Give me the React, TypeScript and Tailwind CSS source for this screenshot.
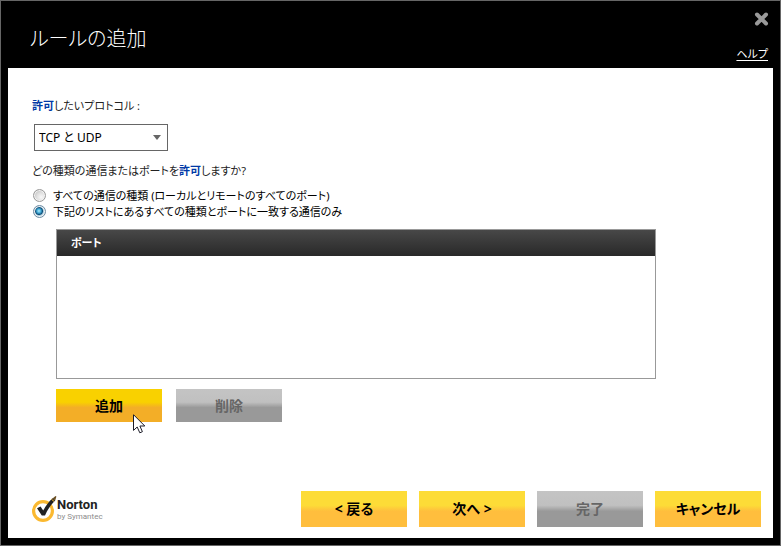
import { useState, type ReactNode } from 'react';

const yellow =
  'bg-[linear-gradient(to_bottom,#fddc37_0%,#fddc37_40%,#ffbe3d_56%,#ffbe3d_100%)] text-black';
const amber =
  'bg-[linear-gradient(to_bottom,#f9d100_0%,#f9d100_40%,#f3ae27_56%,#f3ae27_100%)] text-black';
const grey =
  'bg-[linear-gradient(to_bottom,#c4c4c4_0%,#c0c0c0_40%,#999999_56%,#999999_100%)] text-[#666666]';

function Button({
  tone,
  size = 'h-9',
  disabled = false,
  children,
}: {
  tone: string;
  size?: string;
  disabled?: boolean;
  children: ReactNode;
}) {
  return (
    <button
      type="button"
      disabled={disabled}
      className={`relative w-[106px] text-sm leading-5 font-bold whitespace-pre ${size} ${tone}`}
    >
      {children}
    </button>
  );
}

function RadioRow({
  id,
  checked,
  onChange,
  children,
}: {
  id: string;
  checked: boolean;
  onChange: () => void;
  children: ReactNode;
}) {
  return (
    <div className="flex h-4 items-center gap-[7px]">
      <input
        type="radio"
        id={id}
        name="traffic"
        checked={checked}
        onChange={onChange}
        className="size-[13px] shrink-0 appearance-none rounded-full border border-[#9a9a9a] bg-[radial-gradient(circle_at_65%_65%,#f8f8f8_0%,#dedede_45%,#c4c4c4_75%)] shadow-[inset_0_0_0_1px_#f2f2f2] checked:border-[#6d8ca3] checked:bg-[radial-gradient(circle_at_45%_45%,#b4ecfa_0%,#3fa9d6_24%,#12527c_42%,#a9cbdd_54%,#dcebf2_75%)]"
      />
      <label htmlFor={id} className="pt-0.5 text-[11px] leading-4 whitespace-nowrap text-black">
        {children}
      </label>
    </div>
  );
}

function NortonLogo() {
  return (
    <div className="flex items-center">
      <svg width="25" height="27" viewBox="0 0 25 27" fill="none" aria-hidden="true">
        <circle cx="11" cy="15" r="9.4" stroke="#fbb930" strokeWidth="3.2" />
        <path d="M5 12.2 8.6 10.4 11.2 14.6C13.6 10 16.8 5.6 20.6 2.2L23.2 4.4C18.8 8.8 15.6 13.5 13 19.6H9.8Z" fill="#222" />
        <path d="M20.4 2.4 23.6 0 24.4 .6 23.2 4.4Z" fill="#6b5024" />
        <path d="m19.4 3.2 2.7 2.3" stroke="#fbb930" />
      </svg>
      <div className="flex flex-col pt-0.5 font-['Roboto',sans-serif]">
        <span className="text-[13px] leading-[14px] font-bold text-[#222]">Norton</span>
        <span className="text-[8px] leading-[10px] text-[#8c8c8c]">by Symantec</span>
      </div>
    </div>
  );
}

function Pointer() {
  return (
    <svg className="absolute top-[25px] left-[77px]" width="13" height="20" viewBox="0 0 13 20" aria-hidden="true">
      <path
        d="M.5.7V16.4L4.2 13 6.8 18.8 9.4 17.7 6.9 12H11.8Z"
        fill="#fff"
        stroke="#1c1c28"
        strokeWidth="1"
      />
    </svg>
  );
}

export default function App() {
  const [scope, setScope] = useState('listed');

  return (
    <div className="flex min-h-screen flex-col border border-[#666] bg-black px-[7px] pb-[7px] font-['Noto_Sans','Noto_Sans_CJK_JP',sans-serif] [font-feature-settings:'palt']">
      <header className="flex h-[67px] justify-between text-white">
        <h1 className="pt-[22px] pl-[22px] text-xl leading-8 font-light">ルールの追加</h1>
        <div className="flex flex-col items-end">
          <button type="button" aria-label="閉じる" className="mt-[11px] mr-1 block">
            <svg width="15" height="14" viewBox="0 0 15 14" aria-hidden="true">
              <path d="m3 2.5 9 9m0-9-9 9" stroke="#999" strokeWidth="4" strokeLinecap="round" />
            </svg>
          </button>
          <a href="#help" className="mt-5 mr-[5px] text-[11px] leading-4 underline underline-offset-2">
            ヘルプ
          </a>
        </div>
      </header>

      <main className="flex grow flex-col bg-white pt-7 pr-3 pb-[11px] pl-6">
        <label htmlFor="protocol" className="pt-0.5 text-[11px] leading-4 text-[#222]">
          <span className="font-bold text-[#0039a6]">許可</span>したいプロトコル :
        </label>
        <div className="mt-[10px] ml-0.5 grid w-[134px] items-center">
          <select
            id="protocol"
            className="col-start-1 row-start-1 h-[27px] w-full appearance-none border border-[#666] bg-white pl-1 text-xs text-black"
          >
            <option>TCP と UDP</option>
            <option>TCP</option>
            <option>UDP</option>
          </select>
          <svg
            className="pointer-events-none col-start-1 row-start-1 mr-[7px] justify-self-end"
            width="8"
            height="5"
            viewBox="0 0 8 5"
            aria-hidden="true"
          >
            <path d="M0 0h8L4 5Z" fill="#666" />
          </svg>
        </div>

        <fieldset>
          <legend className="pt-3 text-[11px] leading-4 text-[#222]">
            どの種類の通信またはポートを<span className="font-bold text-[#0039a6]">許可</span>しますか?
          </legend>
          <div className="mt-2 ml-px">
            <RadioRow id="all" checked={scope === 'all'} onChange={() => setScope('all')}>
              すべての通信の種類 (ローカルとリモートのすべてのポート)
            </RadioRow>
            <RadioRow id="listed" checked={scope === 'listed'} onChange={() => setScope('listed')}>
              下記のリストにあるすべての種類とポートに一致する通信のみ
            </RadioRow>
          </div>
        </fieldset>

        <div className="mt-[10px] mr-[105px] ml-6 h-[150px] border border-[#999]">
          <table className="w-full">
            <thead>
              <tr className="bg-linear-to-b from-[#484848] to-[#292929]">
                <th className="h-[26px] pl-[14px] text-left text-[11px] leading-4 font-bold text-white">ポート</th>
              </tr>
            </thead>
          </table>
        </div>

        <div className="mt-[10px] ml-6 flex gap-[14px]">
          <Button tone={amber} size="h-[33px]">
            追加
            <Pointer />
          </Button>
          <Button tone={grey} size="h-[33px]" disabled>
            削除
          </Button>
        </div>

        <footer className="mt-auto flex items-center justify-between">
          <NortonLogo />
          <div className="flex gap-3">
            <Button tone={yellow}>&lt; 戻る</Button>
            <Button tone={yellow}>次へ &gt;</Button>
            <Button tone={grey} disabled>
              完了
            </Button>
            <Button tone={yellow}>キャンセル</Button>
          </div>
        </footer>
      </main>
    </div>
  );
}
